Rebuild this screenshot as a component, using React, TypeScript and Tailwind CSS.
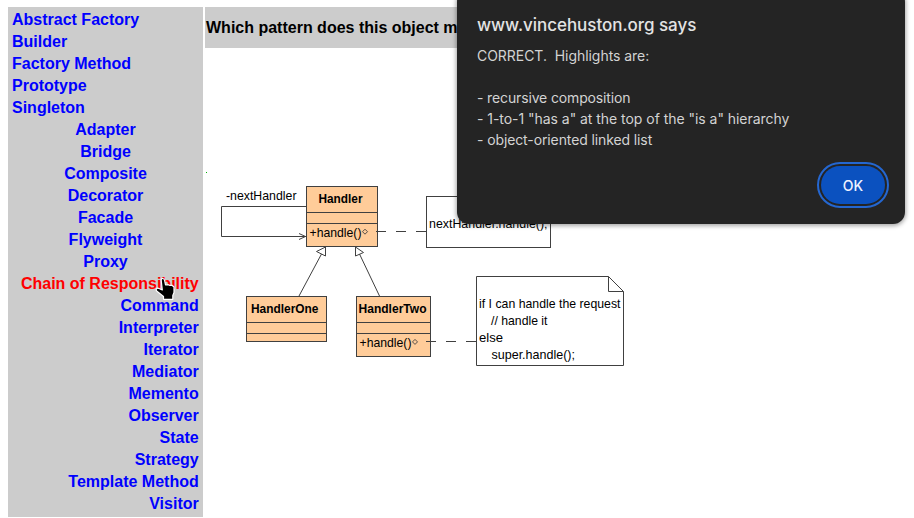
import React from "react";

const creational = ["Abstract Factory", "Builder", "Factory Method", "Prototype", "Singleton"];
const structural = ["Adapter", "Bridge", "Composite", "Decorator", "Facade", "Flyweight", "Proxy"];
const behavioral = [
  "Chain of Responsibility", "Command", "Interpreter", "Iterator", "Mediator", "Memento",
  "Observer", "State", "Strategy", "Template Method", "Visitor",
];

function PatternList({ items, align }: { items: string[]; align: string }) {
  return (
    <ul className={align}>
      {items.map((name) => (
        <li
          key={name}
          className={name === "Chain of Responsibility" ? "h-[22px] text-[#ff0000]" : "h-[22px] text-[#0000ff]"}
        >
          {name}
        </li>
      ))}
    </ul>
  );
}

type LabelProps = { x: number; y: number; w: number; bold?: boolean; children: string };

function Label({ x, y, w, bold, children }: LabelProps) {
  return (
    <text
      x={x}
      y={y}
      textLength={w}
      lengthAdjust="spacingAndGlyphs"
      fill="#000"
      stroke="none"
      className={bold ? "text-[13px] font-bold" : "text-[13px]"}
    >
      {children}
    </text>
  );
}

function Diagram() {
  return (
    <svg
      width="440"
      height="210"
      viewBox="200 165 440 210"
      className="block font-['Liberation_Sans',sans-serif]"
      fill="none"
      stroke="#404040"
      strokeWidth="1"
    >
      <rect x="206" y="172" width="1" height="1" fill="#00b000" stroke="none" />
      <g fill="#ffcc99">
        <rect x="306.5" y="186.5" width="71" height="60" />
        <rect x="246.5" y="296.5" width="80" height="45" />
        <rect x="356.5" y="296.5" width="74" height="60" />
      </g>
      <path d="M306 212.5H378M306 223.5H378M246 322.5H327M246 333.5H327M356 322.5H431M356 333.5H431" />
      <path d="M306 206.5H221.5V236.5H306M299 233.5L305.5 236.5L299 239.5" />
      <path d="M376 231.5H386M396 231.5H406M416 231.5H426M426 341.5H436M446 341.5H456M466 341.5H476" />
      <path d="M325.5 247L316.5 251.5L325.5 256ZM321.5 254L299 296M355.5 247V256L363.5 252.5ZM359.5 254L379.5 296" />
      <path d="M362.5 231.7L365 229.2L367.5 231.7L365 234.2ZM412.5 341.9L415 339.4L417.5 341.9L415 344.4Z" strokeWidth=".9" />
      <rect x="426.5" y="196.5" width="124" height="51" />
      <path d="M608.5 276.5H476.5V365.5H623.5V291.5H608.5ZL623.5 291.5" />
      <Label x={226} y={200} w={70.5}>-nextHandler</Label>
      <Label x={318.5} y={203} w={44} bold>Handler</Label>
      <Label x={309.5} y={237} w={52}>+handle()</Label>
      <Label x={251} y={313} w={67.5} bold>HandlerOne</Label>
      <Label x={358.5} y={313} w={68} bold>HandlerTwo</Label>
      <Label x={359.5} y={347} w={52}>+handle()</Label>
      <Label x={429} y={228} w={118.5}>nextHandler.handle();</Label>
      <Label x={479} y={308} w={141.5}>if I can handle the request</Label>
      <Label x={491} y={325} w={56.5}>// handle it</Label>
      <Label x={479} y={342} w={24}>else</Label>
      <Label x={491.5} y={359} w={83.5}>super.handle();</Label>
    </svg>
  );
}

function AlertDialog() {
  return (
    <div
      role="alertdialog"
      className="absolute left-[457px] top-[-10px] flex h-[234px] w-[448px] flex-col rounded-xl bg-[#242424] px-5 pt-[23px] font-['Inter',sans-serif] text-[#e3e3e3] shadow-[0_1px_4px_1px_rgba(0,0,0,0.35)]"
    >
      <h1 className="h-6 whitespace-nowrap text-[17px] font-medium leading-6 tracking-[-0.04px]">www.vincehuston.org says</h1>
      <div className="mt-2 whitespace-pre text-[14px] leading-[21px] text-[#d3d3d3]">
        <p className="mb-[21px] tracking-[-0.04px]">{"CORRECT.  Highlights are:"}</p>
        <p className="tracking-[-0.14px]">- recursive composition</p>
        <p className="tracking-[-0.04px]">- 1-to-1 "has a" at the top of the "is a" hierarchy</p>
        <p className="tracking-[-0.11px]">- object-oriented linked list</p>
      </div>
      <button className="mt-4 flex h-[38px] w-16 items-center justify-center self-end rounded-full bg-[#0b51bf] text-[14px] font-medium text-[#eef2ff] outline-2 outline-offset-2 outline-[#2467d1]">
        OK
      </button>
    </div>
  );
}

function HandCursor() {
  return (
    <svg width="22" height="24" viewBox="0 0 22 24" className="absolute left-[154px] top-[277px]">
      <path
        d="M7.2 3.2C7.2 1.8 8 1.3 9 1.5C10 1.7 10.5 2.7 10.7 4L11.5 8L14 7.6L15.5 8.3L18 8.3L20 10V15.5L18.8 18.5V22.3H9.5V19.5L3 14.2C1.2 12.6 2.5 10.8 4.5 11.3L8.3 13Z"
        fill="#000"
        stroke="#fff"
        strokeWidth="1.2"
        strokeLinejoin="round"
      />
    </svg>
  );
}

export default function App() {
  return (
    <div className="relative h-[518px] w-[914px] overflow-hidden bg-white font-['Liberation_Sans',sans-serif]">
      <div className="flex items-start gap-0.5 pl-2 pt-[7px]">
        <nav className="h-[510px] w-[195px] shrink-0 bg-[#cccccc] px-1 pt-[2px] text-[16px] font-bold leading-[22px]">
          <PatternList items={creational} align="text-left" />
          <PatternList items={structural} align="text-center" />
          <PatternList items={behavioral} align="pr-[0.3px] text-right" />
        </nav>
        <main className="min-w-0 flex-1">
          <header className="flex h-[41px] w-[400px] items-center whitespace-nowrap bg-[#cccccc] pl-px text-[16px] font-bold text-black">
            Which pattern does this object m
          </header>
          <div className="-ml-[5px] mt-[117px]">
            <Diagram />
          </div>
        </main>
      </div>
      <AlertDialog />
      <HandCursor />
    </div>
  );
}
